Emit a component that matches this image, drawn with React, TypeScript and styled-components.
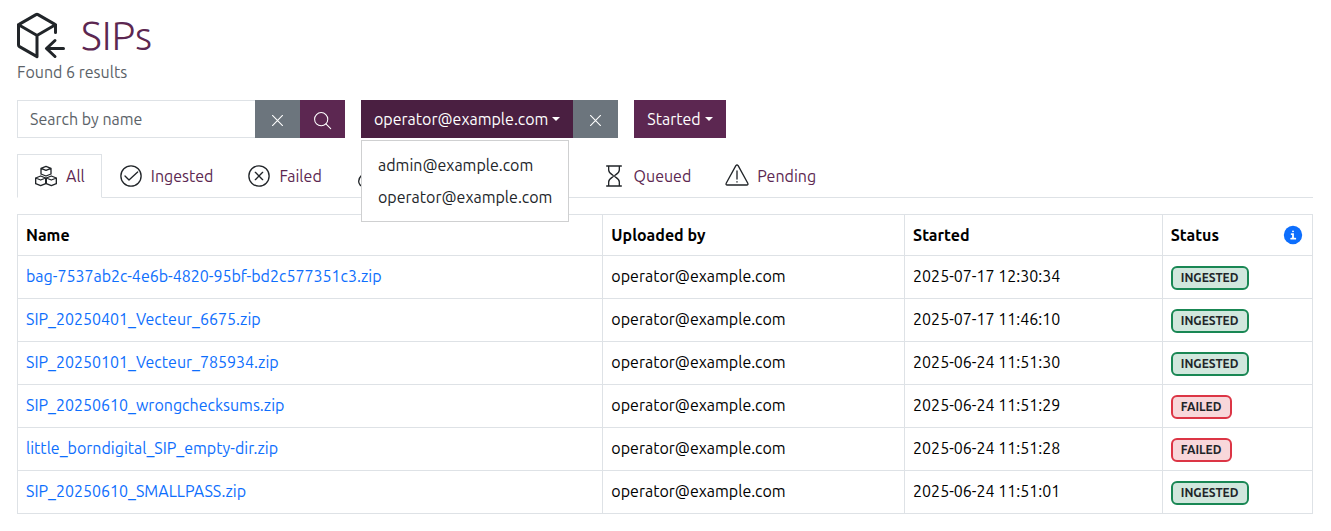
import React from "react";
import styled, { createGlobalStyle } from "styled-components";
import { GoPackageDependencies } from "react-icons/go";

const Global = createGlobalStyle`
  *, *::before, *::after { box-sizing: border-box; }
  body {
    margin: 0;
    background: #fff;
    color: #212529;
    font-family: Ubuntu, Roboto, "Liberation Sans", sans-serif;
    font-size: 16px;
    line-height: 24px;
  }
  button, input { font: inherit; }
`;

const Page = styled.main`
  padding: 12px 18px 16px 17px;
`;

const Title = styled.h1`
  display: flex;
  align-items: center;
  gap: 16px;
  margin: 0;
  color: #5c2751;
  font-size: 40px;
  font-weight: 300;
  line-height: 48px;

  svg {
    color: #212529;
  }
`;

const Results = styled.p`
  margin: 0 0 16px;
  color: #5b6268;
`;

const Toolbar = styled.div`
  display: flex;
  flex-wrap: wrap;
  gap: 16px;
  margin-bottom: 16px;
`;

const Group = styled.div`
  position: relative;
  display: flex;
  height: 38px;
`;

const SearchInput = styled.input`
  width: 238px;
  padding: 0 12px;
  border: 1px solid #dee2e6;
  border-right: 0;
  border-radius: 0;
  background: #fff;
  color: #212529;
  outline: none;

  &::placeholder {
    color: #5b6268;
    opacity: 1;
  }
`;

const fills = { primary: "#5c2751", active: "#4a1f41", secondary: "#6c757d" };

const Button = styled.button<{ $fill: keyof typeof fills }>`
  display: flex;
  align-items: center;
  gap: 4px;
  padding: 0 13px;
  border: 0;
  background: ${(p) => fills[p.$fill]};
  color: #fff;
  cursor: pointer;

  svg {
    margin-top: 3px;
  }
`;

const Caret = styled.span`
  border: 4px solid transparent;
  border-top-color: currentColor;
  border-bottom: 0;
`;

const Menu = styled.ul`
  position: absolute;
  top: 40px;
  left: 0;
  z-index: 10;
  margin: 0;
  padding: 8px 0;
  border: 1px solid #cfd0d1;
  background: #fff;
  list-style: none;
`;

const MenuLink = styled.a`
  display: block;
  padding: 4px 16px;
  color: #212529;
  text-decoration: none;
`;

const Tabs = styled.nav`
  display: flex;
  margin-bottom: 16px;
  border-bottom: 1px solid #dee2e6;
`;

const Tab = styled.a<{ $active?: boolean }>`
  display: flex;
  align-items: center;
  gap: 8px;
  height: 44px;
  margin-bottom: -1px;
  padding: 0 16px;
  border: 1px solid ${(p) => (p.$active ? "#dee2e6" : "transparent")};
  border-bottom-color: ${(p) => (p.$active ? "#fff" : "transparent")};
  color: #5c2751;
  text-decoration: none;
  white-space: nowrap;

  svg {
    color: #212529;
  }
`;

const Table = styled.table`
  width: 100%;
  border-collapse: collapse;
  table-layout: fixed;
  color: #000;
`;

const Col = styled.col<{ $width: string }>`
  width: ${(p) => p.$width};
`;

const Th = styled.th`
  height: 41px;
  padding: 0 8px;
  border: 1px solid #dee2e6;
  font-weight: 700;
  text-align: left;
`;

const Td = styled.td`
  padding: 8px;
  border: 1px solid #dee2e6;
  vertical-align: top;
`;

const StatusHead = styled.div`
  display: flex;
  align-items: center;
  justify-content: space-between;
`;

const InfoButton = styled.button`
  display: flex;
  padding: 0;
  border: 0;
  background: none;
  color: #0d6efd;
  cursor: pointer;
`;

const FileLink = styled.a`
  color: #0d6efd;
  text-decoration: none;
`;

const Badge = styled.span<{ $failed: boolean }>`
  display: block;
  width: fit-content;
  margin-top: 2px;
  padding: 0 8px;
  border: 2px solid ${(p) => (p.$failed ? "#dc3545" : "#198754")};
  border-radius: 6px;
  background: ${(p) => (p.$failed ? "#f8d7da" : "#d1e7dd")};
  color: #212529;
  font-size: 12px;
  font-weight: 700;
  line-height: 20px;
`;

const Icon = ({ size = 24, children }: { size?: number; children: React.ReactNode }) => (
  <svg width={size} height={size} viewBox="0 0 36 36" fill="none" stroke="currentColor" strokeWidth="2" strokeLinecap="round" strokeLinejoin="round" aria-hidden="true">
    {children}
  </svg>
);

const CloseIcon = () => (
  <Icon size={19}><path d="M8.5 8.5 27.5 27.5M27.5 8.5 8.5 27.5" /></Icon>
);

const SearchIcon = () => (
  <Icon size={19}><circle cx="15.5" cy="15.5" r="12.5" /><path d="m24.5 24.5 9 9" /></Icon>
);

const block = (x: number, y: number) => (
  <path d={`M${x} ${y}l7.5 -3 7.5 3v8.5l-7.5 3-7.5-3zl7.5 3 7.5-3`} />
);

const BlocksIcon = () => (
  <Icon>{block(10.5, 6.5)}{block(2.5, 21)}{block(18.5, 21)}</Icon>
);

const SuccessIcon = () => (
  <Icon><circle cx="18" cy="18" r="15.2" /><path d="m9 18 6 6L28 12" /></Icon>
);

const RemoveIcon = () => (
  <Icon><circle cx="18" cy="18" r="15.2" /><path d="m12.5 12.5 11 11M23.5 12.5l-11 11" /></Icon>
);

const FlameIcon = () => (
  <Icon><path d="M16 2c2 6-3 10-7 14s-5 6-5 10c0 4 3 8 8 8h8c7 0 11-4 11-10 0-6-4-9-4-14-3 2-4 5-4 8-2-6-2-12-7-16z" /></Icon>
);

const SyncIcon = () => (
  <Icon><path d="M5 18A13 13 0 0 1 29 11M31 18A13 13 0 0 1 7 25M29 4v7h-7M7 32v-7h7" /></Icon>
);

const HourglassIcon = () => (
  <Icon><path d="M7 3h22M7 33h22M10 3v6c0 4 3 5.500 6 7.500q2 1.500 0 3c-3 2-6 3.500-6 7.500v6M26 3v6c0 4-3 5.500-6 7.500q-2 1.500 0 3c3 2 6 3.500 6 7.500v6" /></Icon>
);

const WarningIcon = () => (
  <Icon><path d="M16.300 2.500 2 28.500q-1.500 3 1.500 3h29q3 0 1.500-3L19.700 2.500q-1.700-2-3.400 0zM18 10.500v12M18 26.500v.5" /></Icon>
);

const InfoIcon = () => (
  <svg width="22" height="22" viewBox="0 0 24 24" aria-hidden="true">
    <circle cx="12" cy="12" r="10" fill="currentColor" />
    <path d="M10.500 11H12v5M10 16h4.500M12 8h.01" fill="none" stroke="#fff" strokeWidth="2" strokeLinecap="round" />
  </svg>
);

const tabs = [
  { label: "All", icon: <BlocksIcon />, active: true },
  { label: "Ingested", icon: <SuccessIcon /> },
  { label: "Failed", icon: <RemoveIcon /> },
  { label: "Error", icon: <FlameIcon /> },
  { label: "Processing", icon: <SyncIcon /> },
  { label: "Queued", icon: <HourglassIcon /> },
  { label: "Pending", icon: <WarningIcon /> },
];

const rows = [
  ["bag-7537ab2c-4e6b-4820-95bf-bd2c577351c3.zip", "2025-07-17 12:30:34", "INGESTED"],
  ["SIP_20250401_Vecteur_6675.zip", "2025-07-17 11:46:10", "INGESTED"],
  ["SIP_20250101_Vecteur_785934.zip", "2025-06-24 11:51:30", "INGESTED"],
  ["SIP_20250610_wrongchecksums.zip", "2025-06-24 11:51:29", "FAILED"],
  ["little_borndigital_SIP_empty-dir.zip", "2025-06-24 11:51:28", "FAILED"],
  ["SIP_20250610_SMALLPASS.zip", "2025-06-24 11:51:01", "INGESTED"],
];

export default function App() {
  return (
    <Page>
      <Global />
      <Title><GoPackageDependencies size={48} />SIPs</Title>
      <Results>Found 6 results</Results>
      <Toolbar>
        <Group>
          <SearchInput type="text" placeholder="Search by name" aria-label="Search by name" />
          <Button $fill="secondary" aria-label="Clear search"><CloseIcon /></Button>
          <Button $fill="primary" aria-label="Search"><SearchIcon /></Button>
        </Group>
        <Group>
          <Button $fill="active" aria-expanded="true">operator@example.com<Caret /></Button>
          <Button $fill="secondary" aria-label="Clear uploader"><CloseIcon /></Button>
          <Menu>
            <li><MenuLink href="#">admin@example.com</MenuLink></li>
            <li><MenuLink href="#">operator@example.com</MenuLink></li>
          </Menu>
        </Group>
        <Group><Button $fill="primary">Started<Caret /></Button></Group>
      </Toolbar>
      <Tabs>
        {tabs.map((t) => (
          <Tab key={t.label} href="#" $active={t.active}>{t.icon}{t.label}</Tab>
        ))}
      </Tabs>
      <Table>
        <colgroup>
          <Col $width="45.2%" /><Col $width="23.3%" /><Col $width="19.9%" /><Col $width="11.6%" />
        </colgroup>
        <thead>
          <tr>
            <Th>Name</Th><Th>Uploaded by</Th><Th>Started</Th>
            <Th><StatusHead>Status<InfoButton aria-label="Status legend"><InfoIcon /></InfoButton></StatusHead></Th>
          </tr>
        </thead>
        <tbody>
          {rows.map(([name, started, status]) => (
            <tr key={name}>
              <Td><FileLink href="#">{name}</FileLink></Td>
              <Td>operator@example.com</Td>
              <Td>{started}</Td>
              <Td><Badge $failed={status === "FAILED"}>{status}</Badge></Td>
            </tr>
          ))}
        </tbody>
      </Table>
    </Page>
  );
}
